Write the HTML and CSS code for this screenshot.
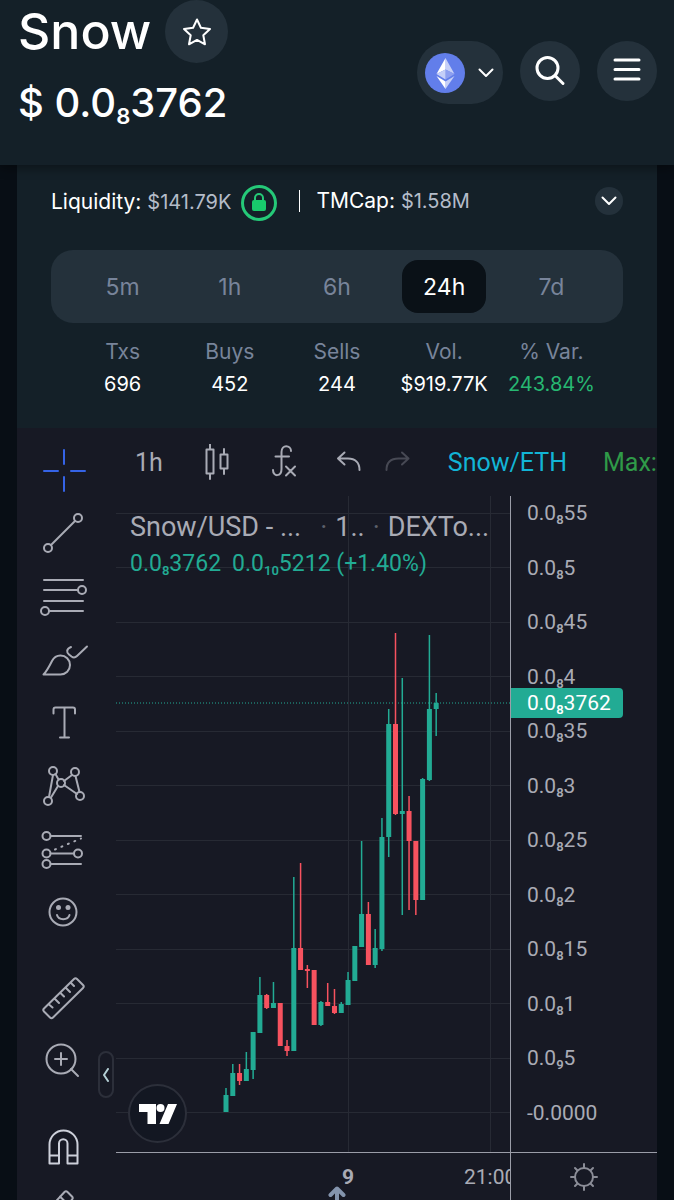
FILE: index.html
```html
<!DOCTYPE html>
<html lang="en">
<head>
  <meta charset="UTF-8">
  <meta name="viewport" content="width=device-width, initial-scale=1.0">
  <title>Snow / ETH</title>
  <link rel="stylesheet" href="styles.css">
</head>
<body>

  <header class="header">
    <div class="token">
      <div class="token-name">
        <h1>Snow</h1>
        <button class="round-btn star-btn" aria-label="Add to favorites">
          <svg width="32" height="32" viewBox="0 0 32 32"><path d="M16 3.5l3.9 8.3 9.1 1.2-6.700 6.300 1.700 9-8-4.400-8 4.400 1.700-9L3 13l9.100-1.200z"/></svg>
        </button>
      </div>
      <p class="token-price">$ 0.0<sub>8</sub>3762</p>
    </div>
    <nav class="actions">
      <button class="chain-btn" aria-label="Select chain">
        <svg class="eth" width="40" height="40" viewBox="0 0 40 40">
          <circle cx="20" cy="20" r="20" fill="#627eea"/>
          <path d="M20.5 5v11.5l9 4.5z" fill="#c5cff8"/>
          <path d="M20.5 5l-9 16 9-4.5z" fill="#fff"/>
          <path d="M20.5 16.5v10l9-5.5z" fill="#8d9ff0"/>
          <path d="M20.5 16.5v10L11.5 21z" fill="#c5cff8"/>
          <path d="M20.5 28.5V36l9-13z" fill="#c5cff8"/>
          <path d="M20.5 28.5V36l-9-13z" fill="#fff"/>
        </svg>
        <svg width="18" height="12" viewBox="0 0 18 12"><path d="M2.5 2.5L9 9l6.500-6.500"/></svg>
      </button>
      <button class="round-btn" aria-label="Search">
        <svg width="32" height="32" viewBox="0 0 32 32"><circle cx="13.5" cy="13" r="10.5"/><path d="M21 20.5l8 8"/></svg>
      </button>
      <button class="round-btn" aria-label="Menu">
        <svg width="32" height="32" viewBox="0 0 32 32"><path d="M4 5h24M4 14.5h24M4 24h24"/></svg>
      </button>
    </nav>
  </header>

  <main class="pair">
    <section class="info">
      <div class="liquidity">
        <p>Liquidity: <span>$141.79K</span></p>
        <svg class="lock" width="36" height="36" viewBox="0 0 36 36">
          <circle cx="18" cy="18" r="16.5"/>
          <path class="shackle" d="M14 16v-3a4 4 0 0 1 8 0v3"/>
          <rect x="11" y="15" width="14" height="11" rx="2"/>
        </svg>
        <p class="mcap">TMCap: <span>$1.58M</span></p>
        <button class="more-btn" aria-label="Show more">
          <svg width="18" height="12" viewBox="0 0 18 12"><path d="M2.5 2.5L9 9l6.500-6.500"/></svg>
        </button>
      </div>

      <div class="periods">
        <button>5m</button>
        <button>1h</button>
        <button>6h</button>
        <button class="active">24h</button>
        <button>7d</button>
      </div>

      <table class="stats">
        <thead>
          <tr><th>Txs</th><th>Buys</th><th>Sells</th><th>Vol.</th><th>% Var.</th></tr>
        </thead>
        <tbody>
          <tr><td>696</td><td>452</td><td>244</td><td>$919.77K</td><td class="up">243.84%</td></tr>
        </tbody>
      </table>
    </section>

    <section class="chart">
      <aside class="tools">
        <div class="tool-group">
          <button class="selected" aria-label="Cross"><svg viewBox="0 0 63 63"><path d="M32 11v14M32 38v14M12 32h14M39 32h14"/></svg></button>
          <button aria-label="Trend line"><svg viewBox="0 0 63 63"><circle cx="46" cy="16" r="4"/><circle cx="16" cy="46" r="4"/><path d="M19 43l24-24"/></svg></button>
          <button aria-label="Fib retracement"><svg viewBox="0 0 63 63"><path d="M12 15h39M12 25h34M12 36h39M17 46h34"/><circle cx="50" cy="25" r="4"/><circle cx="13" cy="46" r="4"/></svg></button>
          <button aria-label="Brush"><svg viewBox="0 0 63 63"><path d="M11.5 46.5C15 43 17.5 38 20 33c2-4 5-5.500 8.500-5.500a9.500 9.500 0 0 1 0 19zM39 19c-5 2-4.500 5.500-2 7.500l2.500 2c2 1.500 3.500 1.500 5.500-.5l10-9.500"/></svg></button>
          <button aria-label="Text"><svg viewBox="0 0 63 63"><path d="M21.5 22.5v-4q0-2 2-2H41q2 0 2 2v4M32.5 16.5v30M28 46.5h9"/></svg></button>
          <button aria-label="Patterns"><svg viewBox="0 0 63 63"><path d="M21 21l-4 22M23.5 20l3 5.500M32 27l8-6M32 31l13 9M43.5 22l4 16M26 32l-7 11.500"/><circle cx="21" cy="17" r="4"/><circle cx="43" cy="18" r="4"/><circle cx="29" cy="29" r="4"/><circle cx="48" cy="42" r="4"/><circle cx="16" cy="47" r="4"/></svg></button>
          <button aria-label="Forecast"><svg viewBox="0 0 63 63"><path d="M18.5 19H49M18.5 36.5H42M18.5 47H49"/><path d="M23 32.500l26-11" stroke-dasharray="1 6"/><circle cx="14.5" cy="19" r="4"/><circle cx="14.5" cy="36.5" r="4"/><circle cx="46" cy="36.5" r="4"/><circle cx="14.5" cy="47" r="4"/></svg></button>
          <button aria-label="Icons"><svg viewBox="0 0 63 63"><circle cx="31" cy="32" r="13.5"/><path d="M25 35c1.500 5.500 11 5.500 12.500 0"/><g class="solid"><circle cx="26.5" cy="27.5" r="2.5"/><circle cx="36" cy="27.5" r="2.5"/></g></svg></button>
        </div>
        <div class="tool-group">
          <button aria-label="Measure"><svg viewBox="0 0 63 63"><path d="M42 12q1.500-1.500 3 0l6 6q1.500 1.500 0 3L21 50.5q-1.500 1.500-3 0l-6-6q-1.500-1.500 0-3zM17 37.5l3.500 3M22.5 31.5l4.500 4.500M28.5 26l3.500 3.500M33.5 20.5l4.500 4.500M38.5 15.5l3.500 3.500"/></svg></button>
          <button aria-label="Zoom in"><svg viewBox="0 0 63 63"><circle cx="29" cy="29" r="14.5"/><path d="M39 39l7 7M29 23v12M23 29h12"/></svg></button>
        </div>
        <div class="tool-group">
          <button class="bright" aria-label="Magnet"><svg viewBox="0 0 63 63"><path d="M17.5 46.5v-19a14 14 0 0 1 28 0v19h-10v-20a4 4 0 0 0-8.500 0v20zM17.5 38.5H27M35.5 38.5h10"/></svg></button>
          <button aria-label="Lock drawing"><svg viewBox="0 0 63 63"><path d="M14 42l1-11 17.500-19q1.500-1.500 3 0l4.500 4.500q1.500 1.500 0 3L24 40zM28 16.5l7.500 7.500M30.5 22L20 33"/></svg></button>
        </div>
      </aside>
      <button class="collapse-btn" aria-label="Hide drawings toolbar">
        <svg width="8" height="14" viewBox="0 0 8 14"><path d="M6 1L2 7l4 6"/></svg>
      </button>

      <div class="board">
        <div class="toolbar">
          <button>1h</button>
          <button aria-label="Candles"><svg width="32" height="36" viewBox="0 0 32 36"><path d="M7.5 5.5h7v24h-7zM11 0v5.500M11 29.5V35M21.5 10.5h7v14h-7zM25 5v5.500M25 24.5V30"/></svg></button>
          <button aria-label="Indicators"><svg width="32" height="36" viewBox="0 0 32 36"><path d="M24 7c0-6-9.500-7-9.500 1v17c0 8-8.500 8-8.500 1M8.5 12.5H22M19 22.5l9 9M28 22.5l-9 9"/></svg></button>
          <div class="history">
            <button aria-label="Undo"><svg width="28" height="36" viewBox="0 0 28 36"><path d="M9.5 8.5L3 14.5l6.500 6M3 14.5h10c7 0 11.500 4 11.500 11.500"/></svg></button>
            <button aria-label="Redo" class="off"><svg width="28" height="36" viewBox="0 0 28 36"><path d="M18 8.5l6.500 6-6.500 6M24.5 14.5h-10C7 14.5 2.5 18.5 2.5 26"/></svg></button>
          </div>
          <button class="pair-link">Snow/ETH</button>
          <span class="max">Max:</span>
        </div>

        <div class="plot-row">
          <div class="plot">
            <svg id="candles" viewBox="0 0 394 656" preserveAspectRatio="xMaxYMin meet"></svg>
            <div class="legend">
              <div class="legend-title"><span class="symbol">Snow/USD - ...</span><i>·</i><span>1..</span><i>·</i><span>DEXTo...</span></div>
              <div class="legend-values"><span>0.0<sub>8</sub>3762</span><span>0.0<sub>10</sub>5212 (+1.40%)</span></div>
            </div>
            <a class="tv-logo" href="#" aria-label="TradingView">
              <svg width="38" height="20" viewBox="0 0 38 20"><path d="M0 0h17v20H8.500V8H0zM29 0h9l-8.500 20h-9z"/><circle cx="21.5" cy="4" r="4"/></svg>
            </a>
          </div>
          <div class="price-axis">
            <span>0.0<sub>8</sub>55</span>
            <span>0.0<sub>8</sub>5</span>
            <span>0.0<sub>8</sub>45</span>
            <span>0.0<sub>8</sub>4</span>
            <span>0.0<sub>8</sub>35</span>
            <span>0.0<sub>8</sub>3</span>
            <span>0.0<sub>8</sub>25</span>
            <span>0.0<sub>8</sub>2</span>
            <span>0.0<sub>8</sub>15</span>
            <span>0.0<sub>8</sub>1</span>
            <span>0.0<sub>9</sub>5</span>
            <span>-0.0000</span>
            <strong class="last-price">0.0<sub>8</sub>3762</strong>
          </div>
        </div>

        <div class="time-row">
          <div class="time-axis"><b>9</b><span>21:00</span></div>
          <button class="axis-settings" aria-label="Axis settings">
            <svg width="28" height="28" viewBox="0 0 28 28"><circle cx="14" cy="14" r="9"/><path d="M14 1v4M14 23v4M1 14h4M23 14h4M5 5l2.500 2.500M20.5 20.5L23 23M23 5l-2.500 2.500M7.5 20.5L5 23"/></svg>
          </button>
        </div>
      </div>
    </section>

    <button class="scroll-up" aria-label="Scroll up">
      <svg width="18" height="20" viewBox="0 0 18 20"><path d="M9 20V3M2.5 9L9 2.5 15.5 9"/></svg>
    </button>
  </main>

  <script>
    // [high, body top, body bottom, low, direction]
    const candles = [
      [592, 599, 616, 616, "up"],
      [568, 577, 600, 600, "up"],
      [568, 577, 585, 589, "down"],
      [556, 573, 585, 585, "up"],
      [536, 536, 574, 583, "up"],
      [481, 499, 537, 537, "up"],
      [498, 499, 512, 513, "down"],
      [486, 507, 512, 512, "up"],
      [507, 507, 550, 550, "down"],
      [544, 550, 555, 560, "down"],
      [381, 452, 555, 555, "up"],
      [367, 452, 474, 474, "down"],
      [469, 473, 475, 492, "down"],
      [474, 474, 529, 529, "down"],
      [505, 506, 529, 530, "up"],
      [487, 506, 510, 510, "down"],
      [493, 510, 517, 518, "down"],
      [506, 508, 517, 517, "up"],
      [476, 484, 509, 509, "up"],
      [450, 450, 485, 485, "up"],
      [345, 418, 451, 451, "up"],
      [406, 418, 469, 469, "down"],
      [433, 452, 469, 472, "up"],
      [322, 341, 453, 455, "up"],
      [213, 228, 341, 361, "up"],
      [137, 228, 318, 319, "down"],
      [182, 315, 318, 419, "up"],
      [300, 315, 345, 414, "down"],
      [345, 345, 404, 419, "down"],
      [282, 283, 404, 404, "up"],
      [139, 213, 284, 285, "up"],
      [197, 207, 213, 240, "up"]
    ];

    let shapes = "";

    // Grid
    for (let i = 0; i < 12; i++) {
      const y = Math.round(17 + i * 54.45) + 0.5;
      shapes += `<path class="grid" d="M0 ${y}H394"/>`;
    }
    shapes += '<path class="grid" d="M232.5 0V656M374.5 0V656"/>';
    shapes += '<path class="price-line" d="M0 207H394"/>';

    // Candles
    candles.forEach(([high, top, bottom, low, dir], i) => {
      const x = 110 + i * 6.78;
      shapes += `<g class="${dir}"><rect x="${x - 0.75}" y="${high}" width="1.5" height="${low - high}"/>`;
      shapes += `<rect x="${x - 2.5}" y="${top}" width="5" height="${bottom - top}"/></g>`;
    });

    document.getElementById("candles").innerHTML = shapes;
  </script>

</body>
</html>
```
FILE: styles.css
```css
* {
  box-sizing: border-box;
}

body {
  font-family: Inter, sans-serif;
  margin: 0;
  height: 100vh;
  display: flex;
  flex-direction: column;
  background: #080e15;
  color: #fff;
  overflow: hidden;
}

h1, p {
  margin: 0;
  font-weight: 500;
}

button {
  font: inherit;
  color: inherit;
  background: none;
  border: none;
  padding: 0;
  cursor: pointer;
}

svg {
  display: block;
  fill: none;
  stroke: currentColor;
  stroke-width: 2;
  stroke-linecap: round;
  stroke-linejoin: round;
}

sub {
  font-size: 13px;
  font-weight: 600;
  line-height: 0;
  vertical-align: -4px;
}

/* Header */
.header {
  display: flex;
  justify-content: space-between;
  align-items: flex-start;
  height: 165px;
  padding: 0 17px 0 18px;
  background: #142028;
  box-shadow: 0 3px 10px rgba(0, 0, 0, 0.4);
  z-index: 1;
}

.token-name {
  display: flex;
  align-items: center;
  gap: 14px;
}

.token-name h1 {
  font-size: 50px;
  line-height: 63px;
}

.token-price {
  font-size: 40px;
  line-height: 60px;
  margin-top: 10px;
}

.token-price sub {
  font-size: 22px;
  vertical-align: -7px;
}

.actions {
  display: flex;
  gap: 17px;
  padding-top: 41px;
}

.round-btn {
  width: 60px;
  height: 60px;
  border-radius: 50%;
  background: #24313b;
  display: flex;
  align-items: center;
  justify-content: center;
}

.round-btn svg {
  stroke-width: 3;
}

.star-btn {
  width: 63px;
  height: 63px;
}

.star-btn svg {
  stroke-width: 2;
}

.chain-btn {
  display: flex;
  align-items: center;
  gap: 12px;
  height: 63px;
  padding: 0 8px;
  border-radius: 32px;
  background: #24313b;
}

.eth {
  stroke: none;
}

/* Pair info */
.pair {
  flex: 1;
  min-height: 0;
  margin: 0 17px;
  display: flex;
  flex-direction: column;
  position: relative;
}

.info {
  height: 263px;
  padding: 18px 34px 0;
  background: #142028;
}

.liquidity {
  display: flex;
  align-items: center;
  height: 36px;
  font-size: 21px;
}

.liquidity p {
  font-weight: 400;
  white-space: nowrap;
}

.liquidity span {
  font-size: 20px;
  color: #b4bcc9;
}

.lock {
  margin: 4px 22px 0 10px;
  stroke: #25c978;
  stroke-width: 3;
}

.lock .shackle {
  stroke-width: 2;
}

.lock rect {
  fill: #18cb6c;
  stroke: none;
}

.mcap {
  border-left: 1px solid #fff;
  padding-left: 16px;
  line-height: 22px;
}

.more-btn {
  margin-left: auto;
  width: 28px;
  height: 28px;
  border-radius: 50%;
  background: #24313b;
  display: flex;
  align-items: center;
  justify-content: center;
}

.periods {
  display: grid;
  grid-template-columns: repeat(5, 1fr);
  justify-items: center;
  margin-top: 31px;
  padding: 10px 18px;
  border-radius: 22px;
  background: #24313b;
}

.periods button {
  width: 84px;
  height: 53px;
  border-radius: 16px;
  font-size: 23px;
  color: #78849a;
}

.periods .active {
  background: #0a1117;
  color: #fff;
}

.stats {
  width: 100%;
  table-layout: fixed;
  border-collapse: separate;
  border-spacing: 0;
  margin-top: 13px;
  padding: 0 18px;
  text-align: center;
}

.stats th,
.stats td {
  padding: 0;
  font-size: 21px;
  font-weight: 400;
  line-height: 32px;
}

.stats td {
  font-size: 20px;
}

.stats th {
  color: #78849a;
}

.stats .up {
  color: #27b872;
}

/* Chart */
.chart {
  flex: 1;
  min-height: 0;
  display: flex;
  position: relative;
  overflow: hidden;
  background: #171924;
  color: #a9abb5;
  font-family: Roboto, sans-serif;
}

.tools {
  width: 99px;
  padding: 11px 0 0 15px;
  display: flex;
  flex-direction: column;
  flex-shrink: 0;
  gap: 24px;
}

.tool-group button {
  display: block;
  width: 63px;
  height: 63px;
}

.tools .selected {
  color: #3563e6;
}

.tools .bright {
  color: #cdd0da;
}

.tools .solid {
  fill: currentColor;
  stroke: none;
}

.collapse-btn {
  position: absolute;
  left: 81px;
  bottom: 102px;
  width: 16px;
  height: 47px;
  border: 2px solid #2c2f3a;
  border-radius: 8px;
  color: #b5d0d6;
  display: flex;
  align-items: center;
  justify-content: center;
}

.board {
  flex: 1;
  min-width: 0;
  display: flex;
  flex-direction: column;
}

.toolbar {
  display: flex;
  align-items: center;
  gap: 36px;
  height: 68px;
  padding-left: 19px;
  flex-shrink: 0;
  font-size: 25px;
  white-space: nowrap;
  overflow: hidden;
}

.history {
  display: flex;
  gap: 21px;
}

.off {
  color: #474954;
}

.pair-link {
  color: #12b4d6;
}

.max {
  color: #2f9a48;
}

.plot-row {
  flex: 1;
  min-height: 0;
  display: flex;
}

.plot {
  flex: 1;
  min-width: 0;
  position: relative;
}

#candles {
  width: 100%;
  height: 100%;
  stroke: none;
}

#candles .grid {
  stroke: #272a34;
  stroke-width: 1;
}

#candles .price-line {
  stroke: #22ab94;
  stroke-width: 1;
  stroke-dasharray: 1 2;
  stroke-linecap: butt;
}

#candles .up {
  fill: #22ab94;
}

#candles .down {
  fill: #f7525f;
}

.legend {
  position: absolute;
  top: 13px;
  left: 14px;
  white-space: nowrap;
}

.legend-title {
  display: flex;
  font-size: 27px;
  line-height: 36px;
}

.legend-title .symbol {
  margin-right: 11px;
}

.legend-title i {
  width: 23px;
  text-align: center;
  font-style: normal;
  color: #5d606b;
}

.legend-values {
  display: flex;
  gap: 11px;
  font-size: 23px;
  line-height: 38px;
  color: #22ab94;
}

.tv-logo {
  position: absolute;
  left: 12px;
  bottom: 9px;
  width: 59px;
  height: 59px;
  border: 2px solid #2c2f3a;
  border-radius: 50%;
  background: #131722;
  color: #fff;
  display: flex;
  align-items: center;
  justify-content: center;
}

.tv-logo svg {
  fill: currentColor;
  stroke: none;
}

.price-axis {
  position: relative;
  width: 147px;
  padding: 3px 0 25px 16px;
  border-left: 1px solid #9b9da8;
  display: flex;
  flex-direction: column;
  justify-content: space-between;
  font-size: 21px;
  line-height: 28px;
}

.last-price {
  position: absolute;
  top: 192px;
  left: 0;
  padding: 0 12px 0 16px;
  line-height: 30px;
  font-weight: 400;
  color: #fff;
  background: #22ab94;
  border-radius: 0 4px 4px 0;
}

.time-row {
  display: flex;
  height: 48px;
  flex-shrink: 0;
  border-top: 1px solid #9b9da8;
}

.time-axis {
  flex: 1;
  min-width: 0;
  display: flex;
  justify-content: flex-end;
  gap: 110px;
  overflow: hidden;
  font-size: 21px;
  line-height: 48px;
}

.time-axis span {
  width: 46px;
}

.axis-settings {
  width: 147px;
  border-left: 1px solid #9b9da8;
  display: flex;
  align-items: center;
  justify-content: center;
  color: #8b8d97;
}

.scroll-up {
  position: absolute;
  bottom: -6px;
  left: 50%;
  margin-left: -9px;
  color: #8494ad;
}

.scroll-up svg {
  stroke-width: 4;
}
```
